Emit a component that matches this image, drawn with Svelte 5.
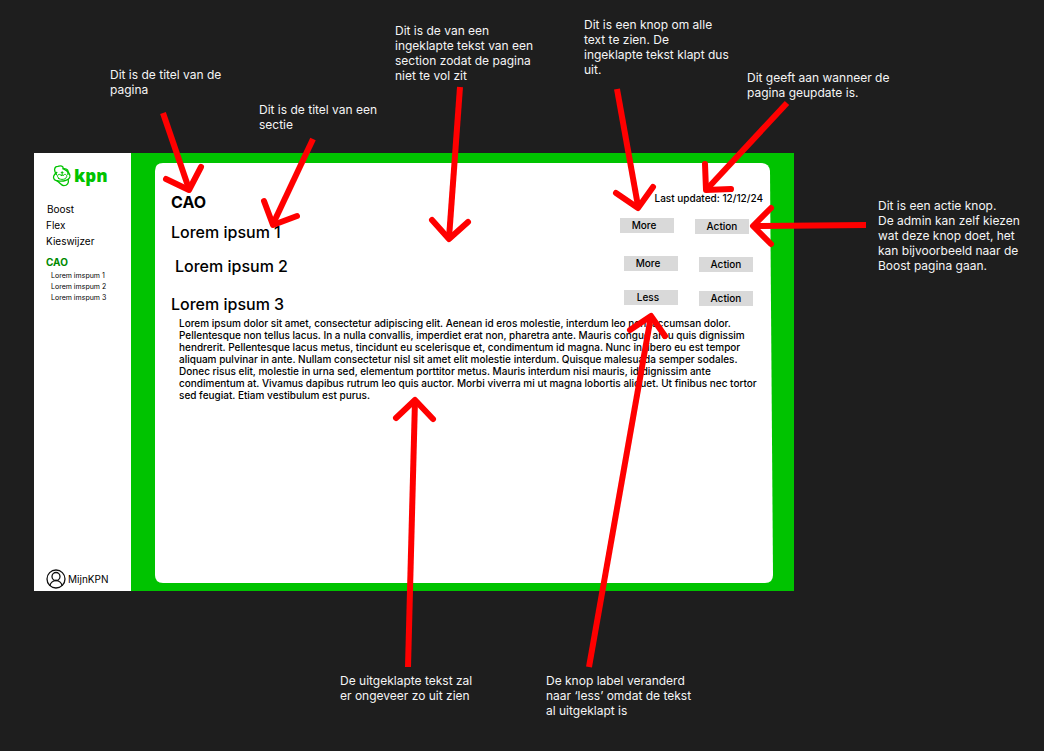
<script>
  const lorem =
    'Lorem ipsum dolor sit amet, consectetur adipiscing elit. Aenean id eros molestie, interdum leo non, accumsan dolor. Pellentesque non tellus lacus. In a nulla convallis, imperdiet erat non, pharetra ante. Mauris congue arcu quis dignissim hendrerit. Pellentesque lacus metus, tincidunt eu scelerisque et, condimentum id magna. Nunc in libero eu est tempor aliquam pulvinar in ante. Nullam consectetur nisl sit amet elit molestie interdum. Quisque malesuada semper sodales. Donec risus elit, molestie in urna sed, elementum porttitor metus. Mauris interdum nisi mauris, id dignissim ante condimentum at. Vivamus dapibus rutrum leo quis auctor. Morbi viverra mi ut magna lobortis aliquet. Ut finibus nec tortor sed feugiat. Etiam vestibulum est purus.';

  let sections = $state([
    { title: 'Lorem ipsum 1', open: false },
    { title: 'Lorem ipsum 2', open: false },
    { title: 'Lorem ipsum 3', open: true }
  ]);

  // Board coordinates on a 1044 x 751 canvas
  const notes = [
    { x: 110, y: 67, lines: ['Dit is de titel van de', 'pagina'] },
    { x: 259, y: 102, lines: ['Dit is de titel van een', 'sectie'] },
    { x: 395, y: 23, lines: ['Dit is de van een', 'ingeklapte tekst van een', 'section zodat de pagina', 'niet te vol zit'] },
    { x: 584, y: 17, lines: ['Dit is een knop om alle', 'text te zien. De', 'ingeklapte tekst klapt dus', 'uit.'] },
    { x: 747, y: 70, lines: ['Dit geeft aan wanneer de', 'pagina geupdate is.'] },
    { x: 878, y: 198, lines: ['Dit is een actie knop.', 'De admin kan zelf kiezen', 'wat deze knop doet, het', 'kan bijvoorbeeld naar de', 'Boost pagina gaan.'] },
    { x: 340, y: 673, lines: ['De uitgeklapte tekst zal', 'er ongeveer zo uit zien'] },
    { x: 546, y: 673, lines: ['De knop label veranderd', 'naar ‘less’ omdat de tekst', 'al uitgeklapt is'] }
  ];

  const arrows = [
    { shaft: 'M163 113L189 189', head: 'M166 179L189 190L201 167' },
    { shaft: 'M313 139L273 224', head: 'M264 201L273 225L297 216' },
    { shaft: 'M460 87L449 238', head: 'M432 220L449 239L468 222' },
    { shaft: 'M617 89L638 206', head: 'M616 193L638 208L653 187' },
    { shaft: 'M787 103L707 189', head: 'M705 164L706 190L731 189' },
    { shaft: 'M866 225L754 226', head: 'M771 208L753 226L771 244' },
    { shaft: 'M408 667L415 400', head: 'M396 418L415 400L433 419' },
    { shaft: 'M589 667L651 316', head: 'M630 330L651 316L665 336' }
  ];
</script>

<main class="board">
  <div class="frame">
    <aside>
      <div class="logo">
        <svg viewBox="0 0 57 66" aria-hidden="true">
          <path d="M12 29C3 17 5 4 16 4C25 1 33 3 32 11C45 10 49 16 46 28" />
          <path d="M13 22C3 29 0 38 6 44C11 49 30 50 40 46C52 42 56 34 49 24C46 20 38 14 32 11" />
          <path d="M14 48C20 50 25 61 34 62C44 62 50 54 47 43" />
          <path class="fine" d="M19 41L15 34C15 27 24 26 27 33C26 27 31 27 31 33C34 26 43 27 43 34L39 41C32 44 25 44 19 41ZM29 20V28M26 23H32" />
        </svg>
        <span>kpn</span>
      </div>
      <nav>
        <a class="first" href="#boost">Boost</a>
        <a href="#flex">Flex</a>
        <a href="#kieswijzer">Kieswijzer</a>
        <a class="current" href="#cao">CAO</a>
        <div class="sub">
          <a href="#s1">Lorem imspum 1</a>
          <a href="#s2">Lorem imspum 2</a>
          <a href="#s3">Lorem imspum 3</a>
        </div>
      </nav>
      <a class="account" href="#mijnkpn">
        <svg viewBox="0 0 20 20" aria-hidden="true">
          <circle cx="10" cy="10" r="9" />
          <circle cx="10" cy="7.500" r="4" />
          <path d="M4 17c0-3 3-5.500 6-5.500s6 2.500 6 5.500" />
        </svg>
        MijnKPN
      </a>
    </aside>

    <div class="stage">
      <div class="card">
        <svg class="sheet" viewBox="0 0 619 421" preserveAspectRatio="none" aria-hidden="true">
          <path d="M8 0H607Q615 0 616 8L619 413Q619 421 611 421H8Q0 421 0 413V8Q0 0 8 0Z" />
        </svg>
        <header>
          <h1>CAO</h1>
          <p>Last updated: 12/12/24</p>
        </header>
        <div class="sections">
          {#each sections as section, i}
            <section id="s{i + 1}">
              <div class="row" class:near={i === 0} class:indent={i === 1}>
                <h2>{section.title}</h2>
                <button class="toggle" aria-expanded={section.open} onclick={() => (section.open = !section.open)}>
                  {section.open ? 'Less' : 'More'}
                </button>
                <button class="action">Action</button>
              </div>
              {#if section.open}
                <p class="text">{lorem}</p>
              {/if}
            </section>
          {/each}
        </div>
      </div>
    </div>
  </div>

  <svg class="arrows" viewBox="0 0 1044 751" preserveAspectRatio="none" aria-hidden="true">
    {#each arrows as arrow}
      <path d={arrow.shaft} />
      <path class="head" d={arrow.head} />
    {/each}
  </svg>

  {#each notes as note}
    <p class="note" style="left: {(note.x / 1044) * 100}%; top: {note.y}px">
      {#each note.lines as line, i}{#if i > 0}<br />{/if}{line}{/each}
    </p>
  {/each}
</main>

<style>
  :global(body) {
    margin: 0;
    background: #1e1e1e;
  }
  h1, h2, p {
    margin: 0;
  }
  a {
    color: inherit;
    text-decoration: none;
  }
  .board {
    position: relative;
    box-sizing: border-box;
    min-height: 100vh;
    padding: 153px 0 160px;
    display: grid;
    grid-template-columns: 34fr 760fr 250fr;
    align-items: start;
    font-family: Inter, "Liberation Sans", sans-serif;
    color: #000;
  }
  .frame {
    grid-column: 2;
    display: grid;
    grid-template-columns: 97px 1fr;
    min-height: 438px;
    background: #00c300;
  }
  aside {
    display: flex;
    flex-direction: column;
    background: #fff;
    padding: 12px 0 2px 12px;
    font-size: 10px;
    line-height: 16px;
  }
  .logo {
    display: flex;
    align-items: center;
    gap: 2px;
    height: 22px;
    padding-left: 6px;
    color: #00c300;
    font-family: "Open Sans", sans-serif;
    font-size: 17px;
    font-weight: 800;
    line-height: 20px;
  }
  .logo svg {
    width: 20px;
    height: 22px;
    fill: none;
    stroke: currentColor;
    stroke-width: 4;
    stroke-linecap: round;
  }
  .logo .fine {
    stroke-width: 3;
  }
  nav {
    display: flex;
    flex-direction: column;
    padding-top: 14px;
  }
  .first {
    padding-left: 1px;
  }
  .current {
    padding-top: 5px;
    font-weight: 700;
    color: #008a00;
  }
  .sub {
    display: flex;
    flex-direction: column;
    padding-left: 5px;
    font-size: 7px;
    line-height: 11px;
  }
  .account {
    display: flex;
    align-items: center;
    gap: 2px;
    margin-top: auto;
  }
  .account svg {
    width: 20px;
    height: 20px;
    fill: none;
    stroke: #111;
    stroke-width: 1.3;
  }
  .stage {
    display: grid;
    padding: 10px 21px 8px 24px;
  }
  .card {
    position: relative;
    padding: 29px 20px 16px 16px;
  }
  .sheet {
    position: absolute;
    inset: 0;
    width: 100%;
    height: 100%;
    fill: #fff;
  }
  header, .sections {
    position: relative;
  }
  header {
    display: flex;
    justify-content: space-between;
    margin-right: -10px;
    font-size: 10px;
    line-height: 12px;
    font-weight: 500;
  }
  h1 {
    font-size: 16px;
    line-height: 20px;
    font-weight: 700;
  }
  .sections {
    display: grid;
    gap: 14px;
    padding-top: 6px;
  }
  .row {
    display: flex;
    align-items: flex-start;
    gap: 21px;
  }
  .row.near {
    padding-right: 4px;
  }
  .row.indent {
    padding-left: 4px;
  }
  h2 {
    flex: 1;
    padding-top: 4px;
    font-size: 16px;
    line-height: 20px;
    font-weight: 500;
  }
  .indent h2 {
    padding-top: 0;
  }
  button {
    width: 54px;
    height: 15px;
    padding: 0;
    border: 0;
    background: #d9d9d9;
    color: #000;
    font: 500 10px/15px Inter, "Liberation Sans", sans-serif;
  }
  .toggle {
    padding-right: 6px;
  }
  .action {
    margin-top: 1px;
  }
  .text {
    margin-right: -10px;
    padding: 3px 0 0 8px;
    font-size: 10px;
    line-height: 12px;
    font-weight: 500;
  }
  .arrows {
    position: absolute;
    top: 0;
    left: 0;
    width: 100%;
    height: 751px;
    fill: none;
    stroke: #f00;
    stroke-width: 6;
    pointer-events: none;
  }
  .head {
    stroke-linecap: round;
    stroke-linejoin: round;
  }
  .note {
    position: absolute;
    color: #f5f5f5;
    font-size: 12px;
    line-height: 15px;
    font-weight: 400;
    white-space: nowrap;
  }
</style>
